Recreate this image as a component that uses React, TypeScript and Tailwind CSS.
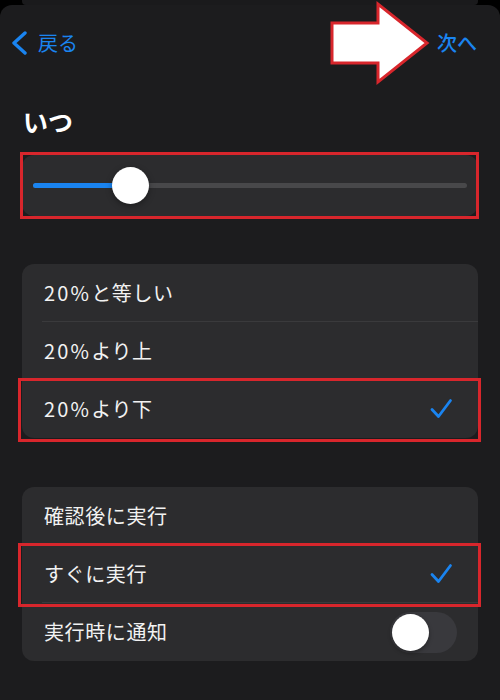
import React from "react";

const font = { fontFamily: '"Noto Sans CJK JP", "Noto Sans", sans-serif' };

function Check() {
  return (
    <svg className="w-[24px] h-[24px]" viewBox="0 0 24 24" fill="none">
      <path
        d="M3 12.5l6.5 7L21.5 3.5"
        stroke="#1a84f0"
        strokeWidth="2.8"
        strokeLinecap="round"
        strokeLinejoin="round"
      />
    </svg>
  );
}

function RedBox({ className }: { className: string }) {
  return (
    <div
      className={`pointer-events-none absolute border-[3px] border-[#d8262c] ${className}`}
    />
  );
}

interface RowProps {
  label: string;
  prefix?: string;
  checked?: boolean;
  divider?: boolean;
  marked?: boolean;
  toggle?: boolean;
}

function Row({ label, prefix, checked, divider, marked, toggle }: RowProps) {
  return (
    <div className="relative h-[58px] flex items-center pl-[22px] pr-[21px]">
      <span className="flex-1 text-[20px] text-[#f2f2f2] tracking-[0.6px]">
        {prefix && <span className="tracking-[2.2px]">{prefix}</span>}
        {label}
      </span>
      {checked && (
        <div className="mr-[4px]">
          <Check />
        </div>
      )}
      {toggle && (
        <div className="w-[67px] h-[41px] rounded-full bg-[#39393d] flex items-center px-[2px]">
          <div className="w-[37px] h-[37px] rounded-full bg-white shadow-[0_2px_4px_rgba(0,0,0,0.35)]" />
        </div>
      )}
      {divider && (
        <div className="absolute left-[20px] right-0 bottom-0 h-px bg-[#3a3a3c]" />
      )}
      {marked && <RedBox className="-left-[4px] -right-[3px] -top-[2px] -bottom-[4px]" />}
    </div>
  );
}

export default function App() {
  return (
    <div
      className="relative w-[500px] h-[700px] bg-black overflow-hidden flex flex-col"
      style={font}
    >
      {/* sheet behind */}
      <div className="h-[5px] mx-[22px] bg-[#1a1a1c] rounded-b-sm" />

      <div className="flex-1 bg-[#1c1c1e] rounded-t-[12px] flex flex-col">
        {/* Nav */}
        <div className="h-[76px] flex items-center justify-between pl-[11px] pr-[23px]">
          <div className="flex items-center gap-[11px] text-[#1a84f0]">
            <svg className="w-[16px] h-[24px]" viewBox="0 0 16 24" fill="none">
              <path
                d="M14 2L3 12l11 10"
                stroke="#1a84f0"
                strokeWidth="3.4"
                strokeLinecap="round"
                strokeLinejoin="round"
              />
            </svg>
            <span className="text-[20px]">戻る</span>
          </div>
          <span className="text-[20px] text-[#1a84f0] font-medium">次へ</span>
        </div>

        {/* Title */}
        <div className="mt-[24px] px-[23px] text-[25px] leading-[32px] font-bold text-white">
          いつ
        </div>

        {/* Slider */}
        <div className="relative mt-[18px] mx-[22px] h-[61px] rounded-[12px] bg-[#2c2c2e] flex items-center px-[11px]">
          <div className="relative flex-1 h-[5px] rounded-full bg-[#48484a]">
            <div className="absolute left-0 top-0 h-full w-[97px] rounded-full bg-[#1a84f0]" />
            <div className="absolute left-[79px] -top-[16px] w-[37px] h-[37px] rounded-full bg-white shadow-[0_2px_6px_rgba(0,0,0,0.35)]" />
          </div>
          <RedBox className="-left-[2px] -right-[1px] -top-[3px] -bottom-[3px]" />
        </div>

        {/* Condition list */}
        <div className="mt-[48px] mx-[22px] rounded-[12px] bg-[#2c2c2e]">
          <Row prefix="20%" label="と等しい" divider />
          <Row prefix="20%" label="より上" divider />
          <Row prefix="20%" label="より下" checked marked />
        </div>

        {/* Run list */}
        <div className="mt-[49px] mx-[22px] rounded-[12px] bg-[#2c2c2e]">
          <Row label="確認後に実行" divider />
          <Row label="すぐに実行" checked marked divider />
          <Row label="実行時に通知" toggle />
        </div>
      </div>

      {/* Annotation arrow */}
      <svg
        className="absolute left-[328px] top-0 w-[104px] h-[88px]"
        viewBox="328 0 104 88"
      >
        <polygon
          points="332,23 378,23 378,4 427,43 378,82 378,63 332,63"
          fill="#ffffff"
          stroke="#d8262c"
          strokeWidth="3"
          strokeLinejoin="miter"
        />
      </svg>
    </div>
  );
}
